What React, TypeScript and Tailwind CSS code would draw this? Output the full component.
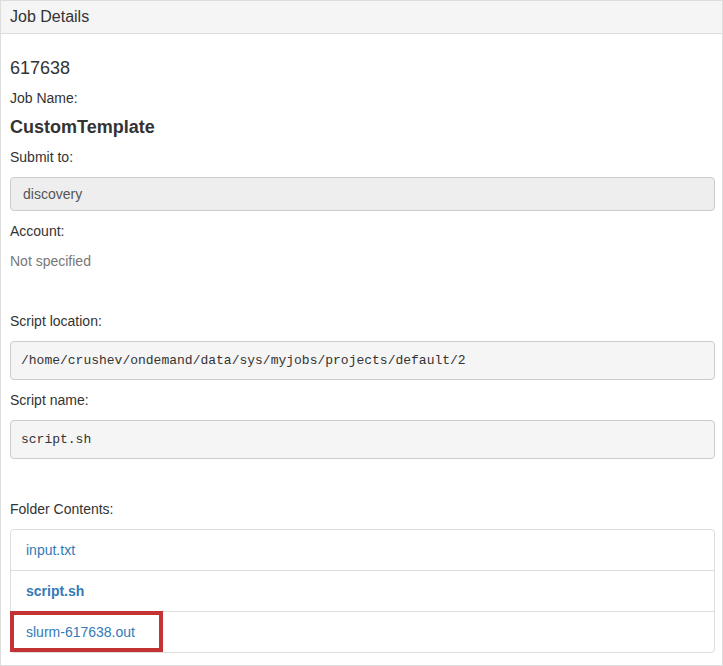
import React from 'react';

const Label: React.FC<{ text: string; className?: string }> = ({ text, className = '' }) => (
    <div className={`text-[14px] leading-5 text-[#333] ${className}`}>{text}</div>
);

const PreBox: React.FC<{ text: string }> = ({ text }) => (
    <pre className="mt-[10px] h-[39px] px-[10px] pt-px flex items-center bg-[#f5f5f5] border border-[#ccc] rounded text-[13px] text-[#333] font-['Liberation_Mono',monospace]">
        {text}
    </pre>
);

const files = [
    { name: 'input.txt', bold: false, highlight: false },
    { name: 'script.sh', bold: true, highlight: false },
    { name: 'slurm-617638.out', bold: false, highlight: true },
];

const App: React.FC = () => {
    return (
        <div className="w-[723px] h-[666px] bg-white font-['Liberation_Sans',Arial,sans-serif] text-[#333] overflow-hidden">
            <div className="border border-[#ddd] h-[666px]">
                {/* Panel heading */}
                <div className="h-[33px] bg-[#f5f5f5] border-b border-[#ddd] px-[9px] flex items-center text-[16px]">
                    Job Details
                </div>

                {/* Panel body */}
                <div className="pl-[9px] pr-[7px] pt-[24px] flex flex-col">
                    <div className="text-[18px] leading-5">617638</div>
                    <Label text="Job Name:" className="mt-[10px]" />
                    <div className="mt-[9px] text-[18px] leading-5 font-bold">CustomTemplate</div>
                    <Label text="Submit to:" className="mt-[10px]" />
                    <div className="mt-[10px] h-[34px] px-[12px] flex items-center bg-[#eee] border border-[#ccc] rounded text-[14px] text-[#555]">
                        discovery
                    </div>
                    <Label text="Account:" className="mt-[10px]" />
                    <div className="mt-[10px] text-[14px] leading-5 text-[#777]">Not specified</div>

                    <Label text="Script location:" className="mt-[40px]" />
                    <PreBox text="/home/crushev/ondemand/data/sys/myjobs/projects/default/2" />
                    <Label text="Script name:" className="mt-[10px]" />
                    <PreBox text="script.sh" />

                    <Label text="Folder Contents:" className="mt-[40px]" />
                    <div className="mt-[10px] border border-[#ddd] rounded">
                        {files.map((f, i) => (
                            <div
                                key={f.name}
                                className={`relative flex items-center px-[15px] ${i > 0 ? 'h-[41px] border-t border-[#ddd]' : 'h-[40px]'}`}
                            >
                                <span className={`text-[14px] text-[#337ab7] ${f.bold ? 'font-bold' : ''}`}>
                                    {f.name}
                                </span>
                                {f.highlight && (
                                    <div className="absolute -top-px -left-px w-[153px] h-[41px] border-4 border-[#c43333]" />
                                )}
                            </div>
                        ))}
                    </div>
                </div>
            </div>
        </div>
    );
};

export default App;
